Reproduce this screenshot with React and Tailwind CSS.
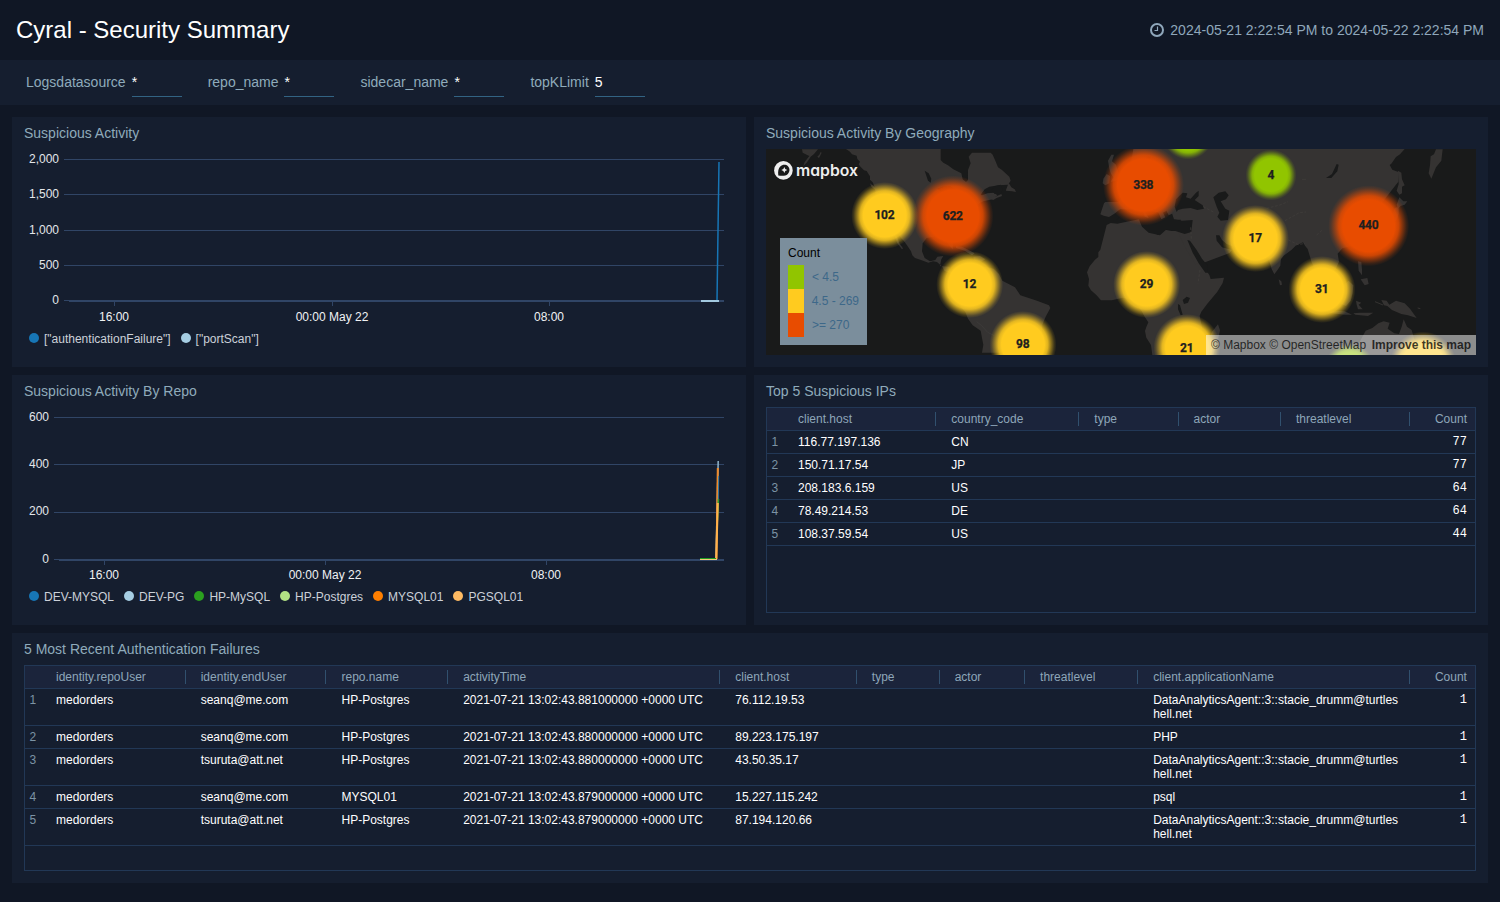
import React from "react";

const filters = [
  ["Logsdatasource", "*"],
  ["repo_name", "*"],
  ["sidecar_name", "*"],
  ["topKLimit", "5"],
];

function Panel({ title, className = "", children }) {
  return (
    <section className={`flex flex-col bg-[#151e2f] px-3 pt-2 ${className}`}>
      <h2 className="h-4 text-sm leading-4 text-[#8fabbb] mb-2 whitespace-nowrap">{title}</h2>
      {children}
    </section>
  );
}

function Legend({ items }) {
  return (
    <ul className="flex gap-[10px] pl-[5px] text-xs leading-[14px] text-[#ccd1d9]">
      {items.map(([name, color]) => (
        <li key={name} className="flex gap-[5px] whitespace-nowrap">
          <svg width="10" height="14" viewBox="0 0 10 14">
            <circle cx="5" cy="6" r="5" fill={color} />
          </svg>
          {name}
        </li>
      ))}
    </ul>
  );
}

function Chart({ top, left, grid, axisY, labelY, ticks, children }) {
  return (
    <svg width="710" height="183" viewBox={`24 ${top} 710 183`} className="shrink-0 text-xs">
      {grid.map(([label, y, textY = y]) => (
        <g key={label}>
          <rect x={left} y={y} width={724 - left} height="1" fill="#304566" />
          <text x={left - 5} y={textY + 4} textAnchor="end" fill="#e3e6ea">{label}</text>
        </g>
      ))}
      <rect x={left + 5} y={axisY + 1} width={719 - left} height="1" fill="#304566" />
      {ticks.map(([label, x]) => (
        <g key={label}>
          <rect x={x} y={axisY + 1} width="1" height="5" fill="#304566" />
          <text x={x} y={labelY} textAnchor="middle" fill="#f0f2f4">{label}</text>
        </g>
      ))}
      {children}
    </svg>
  );
}

function Table({ columns, heads, rows, className }) {
  const last = heads.length - 1;
  return (
    <div className={`border border-[#223856] text-xs leading-[14px] ${className}`}>
      <div className={`grid h-[23px] items-center border-b border-[#223856] bg-[#1b243b] text-[#8ea6b9] ${columns}`}>
        <span />
        {heads.map((h, i) => (
          <span
            key={h}
            className={i === last ? "pr-2 text-right" : "h-[14px] border-r border-[#31506e] pl-[15px]"}
          >
            {h}
          </span>
        ))}
      </div>
      {rows.map((row, r) => (
        <div key={r} className={`grid border-b border-[#223856] py-1 text-white ${columns}`}>
          <span className="pl-[4.4px] text-[#7c93a5]">{r + 1}</span>
          {row.map((c, i) =>
            i === last ? (
              <span key={i} className="h-[14px] pr-2 text-right font-['Liberation_Mono',monospace] leading-[15px]">{c}</span>
            ) : (
              <span key={i} className="whitespace-pre pl-[15px]">{c}</span>
            )
          )}
        </div>
      ))}
    </div>
  );
}

const bubbles = [
  ["102", 118.7, 66.5, 33.5, "y", 65.5],
  ["622", 187, 67, 40.5, "r", 66],
  ["12", 203.7, 135.5, 33.5, "y", 134.5],
  ["98", 257, 195.5, 33.5, "y", 194.5],
  ["338", 377.5, 36, 40.5, "r", 35.5],
  ["", 422, -15, 25.5, "g", 0],
  ["4", 505, 26, 25.5, "g", 25],
  ["17", 489.5, 89.5, 33.5, "y", 88.5],
  ["29", 380.7, 135.5, 33.5, "y", 134.5],
  ["31", 556, 140.5, 33.5, "y", 139],
  ["440", 602.7, 76.8, 40.5, "r", 75.5],
  ["21", 421, 198.5, 33.5, "y", 198.3],
  ["", 583.5, 220, 25.5, "g", 0],
  ["", 657, 216, 33.5, "y", 0],
];
const bubbleColors = { y: "#ffcb1f", r: "#e84c00", g: "#91c500" };

function WorldMap() {
  return (
    <svg width="710" height="206" viewBox="0 0 710 206" className="block">
      <defs>
        {Object.entries(bubbleColors).map(([k, c]) => (
          <radialGradient key={k} id={`bubble-${k}`}>
            <stop offset="0.64" stopColor={c} />
            <stop offset="0.74" stopColor={c} stopOpacity="0.86" />
            <stop offset="0.84" stopColor={c} stopOpacity="0.48" />
            <stop offset="0.93" stopColor={c} stopOpacity="0.16" />
            <stop offset="1" stopColor={c} stopOpacity="0" />
          </radialGradient>
        ))}
      </defs>
      <rect width="710" height="206" fill="#191a1a" />
      {/* Americas */}
      <g transform="translate(-6 -39) scale(0.33333)" fill="#353332">
        <path d="M258 117l12 8 6 8 14 4 2 10 8 8-4 8 6 8 10 10 8 2 6 10 4 6v10l8 8 4 9 5 20-4 30 8 36 34 32 14 8 10 16 8 6 8 12 6 6 10 14 12 18 4 12 8 8 18 6 22 8 14-4 12 2 16 14 6 12 26 12 14-4 12 6 8-10 18-12 22-6 28 4 20 4 16 16 10 20 38 20 16 24 50 16 36 14 4 8-14 26-10 24-2 40-14 20-18 24H666l4-24-4-20-4-22-24-16-14-20-8-20-18-20-12-24 8-16 10-22-4-20-14-14-12-4-6-16-28-2 4-20 6-10-18 2-6 10-16 4-16-10-8-20 2-24 12-16 34-6 22 8 10 18 12 14 2-20-4-20 20-28 10-24 20-14 18-14 14-18 12-6 28-6 14-12-10-8-20 2-16 6-4-2 12-16 14-8 28-4 28-2 8-12-4-12-22-20-12-8-8-20-8-18-6-6h-56l-10 12 6 20-8 20 0 30-6 6-10-8-4-18-12-6-12-6-16-12-14-8-8-8V117z" />
        <path d="M738 240l8-22 8 14 10 6 4 8-12-2-18-2zM690 262l16-2 18-8 2 6-16 6-10 6-6-2zM126 118h48l-12 14-10 8-12 18-10 10 4-12 14-18-8-4-12-6zM172 140l6-6 4-8 3 2-8 16zM588 408l18 2 24 12 14 8-8 6-22-14-26-8zM640 440l20-2 16 10-14 8-20-6zM330 220l14 10 14 12-6 2-18-14zM402 374l8 4 8 18 12 18-4 4-14-18z" />
        <path d="M494 182l12 8 8 16-2 12-8-6zM532 236l16-6 22-2 16 10 14 12-20-2-20-4-16 2zM548 250l10-4-4 26-10 4zM694 240l12-12 16-4 6 16-6 12-18 0z" fill="#191a1a" />
        <path d="M415 382l14 30 6 8-4-2-14-20z" fill="#191a1a" />
        <path d="M650 635l15 12 18 20 20 10" stroke="#403e3d" strokeWidth="2" fill="none" />
      </g>
      {/* Europe, Africa, Asia and Oceania */}
      <g transform="translate(354 -39) scale(0.33333)" fill="#353332">
        <path d="M-40 345l12-6 20 2 28-6 30-6 18-4-2 24 22 12 26 14 10-18 30 6 46 0 18 0 6 26-20 4 10 22 20 30 34 50 4 12 40-4-4 16-16 26-30 36-18 24-5 12 8 40-4 36-20 42H97l-4-30-14-22-4-20 4-12 6-14-12-18-8-16-16-20-10-12-30-8-34 8-32 0-14-16-16-14-8-14 2-20-6-20 8-18 16-20 10-8 0-14 6-8z" />
        <path d="M-48 280l4-4 40 0 16-20 8-30 10-50 10-59h814l-14 16-12 8-14 20-5 4 8 14 20 8-2 28-20 26-20 26-32 44-22 42-24 44-20 10-30 8-14 16 4 24-14 30-24 12-14 16-18-30-12-26-12-40-8-10-6-10-22 10-12 12-24 18-8 10-2 20-8 12-10 14-8-16-6-20-10-30-20-6-50-10-24-4-16 22-26 10-48 18-30 6-6-12-24-40-18-38-4-20 10-24-38 0-18-20-60-10-66-2-18 14-16 10-16-4-10-4z" />
        <path d="M-36 152l10-18 8 0-6 20 12 10 6 20 8 22-16 6-14 4 8-14-8-12-4-14zM-52 220l2-14 10-14 10 6-2 22-12 6zM930 165l2-26 10-6 6-15h20l-4 34-16 20-14 34-8-16zM834 182l10 6 2 20 8 18-8 4 0 20-8 4-8-12 6-20zM838 262l12 12 12 0-8 10-12 4-8 8-4-12zM824 294l12-4 0 22-8 22-18 6-4-10 10-12zM658 540l14-16 14-12 14 14-2 22-6 24-14 16-20-8zM708 572l16 6-8 6 12 14-14 0-4-14zM614 598l28 4 32 2 22 10-22 0-50-6zM700 610l20-2 40 0-16 10-38-4zM714 454l10 2 2 22 0 18-10-14zM722 508l20-4 4 18-12 4zM784 570l16 2 8 12 20-12 26 8 16 16 20 28-26-8-20-4-28-12-14-12-10-2zM476 508l8 6 2 10-6 2zM294 643l6 18-4 20-16 54h-18l0-34 14-36zM725 684l12-22 20-8 18-14 16-6 18 4-6 18 20 14 14 2 8-22 6-22 10 22 14 10 8 28 20 22 10 24H700z" />
        <g fill="#191a1a">
          <path d="M-10 330l20-20 28-16 34 4 40 24 20-16 20-8 10 30 24 4 32-2-4 36-20 6-30-10-24-4-20 18-34-8-20-18-6-14-4-10-36 4z" />
          <path d="M164 290l4-22 20-20 14 2-4 12 14 4 16-18 8-6 0 16-12 12 24 16 4 10-20 4-20-6-24 2-14 4-4 6zM280 262l16-14 20-4 10 12-8 12-16 6 14 22 12 6-4 28-22 2-10-12 6-12-8-18zM202 390l8 2 20 28 16 26 16 20 2 22-8 0-20-28-18-32zM288 376l10 0 8 14 14 12 30 12-4 10-18-6-22-6-16-20zM618 204l18-12 14-30 6 2-4 20-18 20zM188 570l12-10 10 4-6 14-12 4zM174 582l6 4 8 28-6 2-8-18z" />
          <path d="M80 140l12 0-4 24 10 20-10 2-14-12z" />
        </g>
        <path d="M68 300l10 8 8 16-12-4zM110 296l16 6 10 20-12 6zM136 296l14-6 10 20-14 6z" />
        <g fill="none" stroke="#423f3d" strokeWidth="2">
          <path d="M440 295l40-10 24-10M495 332l25-14 18-10 20-2M505 390l30 14 20-4M250 290l30 16M590 375l16-14M212 352l2 34M240 480l-6 40" strokeDasharray="8 5" />
          <path d="M546 208h12M765 575l24 10M893 594l8 2" />
        </g>
      </g>
      {bubbles.map(([, x, y, r, k], i) => (
        <circle key={i} cx={x} cy={y} r={r} fill={`url(#bubble-${k})`} />
      ))}
      <g fontFamily="Roboto, sans-serif" fontSize="12" fontWeight="700" letterSpacing="-0.3" textAnchor="middle" fill="#202020" stroke="#202020" strokeWidth="0.25">
        {bubbles.filter((b) => b[0]).map(([n, x, , , , ty]) => (
          <text key={n} x={x - 0.3} y={ty + 4.5}>{n}</text>
        ))}
      </g>
      {/* Map provider mark */}
      <circle cx="17.4" cy="21.4" r="10" fill="#000" opacity="0.25" />
      <circle cx="17.4" cy="21.4" r="9.3" fill="#eeeeee" />
      <path d="M12.3 26.5c-.5-4.400.1-7.100 2-9 2.200-2.200 5.700-2.200 7.700-.2 2.100 2.100 2 5.500-.1 7.600-2.100 2-5.300 2.200-9.600 1.600z" fill="#191a1a" />
      <path d="M18.300 18l.95 2.050 2.050.95-2.050.95-.95 2.050-.95-2.050-2.050-.95 2.050-.95z" fill="#eeeeee" />
      <text
        x="30" y="27" textLength="62" lengthAdjust="spacingAndGlyphs"
        className="font-['Inter',sans-serif] text-[15.5px] font-semibold [font-feature-settings:'cv11']"
        fill="#eeeeee"
      >
        mapbox
      </text>
    </svg>
  );
}

export default function App() {
  return (
    <div className="flex h-[902px] w-[1500px] flex-col overflow-hidden bg-[#101725] font-['Liberation_Sans',Arial,sans-serif]">
      <header className="flex h-[60px] shrink-0 items-center justify-between px-4">
        <h1 className="text-2xl text-white">Cyral - Security Summary</h1>
        <div className="flex items-center gap-1.5 text-sm text-[#8fa7bb]">
          <svg width="14" height="14" viewBox="0 0 14 14" fill="none" stroke="currentColor">
            <circle cx="7" cy="7" r="6" strokeWidth="2" />
            <path d="M7.500 3.500v4H4.500" strokeWidth="1.2" />
          </svg>
          2024-05-21 2:22:54 PM to 2024-05-22 2:22:54 PM
        </div>
      </header>

      <div className="flex h-[45px] shrink-0 gap-[26px] bg-[#151e2f] px-[26px] pt-2 text-sm">
        {filters.map(([name, value]) => (
          <div key={name} className="flex h-[29px] gap-1.5 leading-[28px]">
            <span className="text-[#8fabbb]">{name}</span>
            <span className="w-[50px] border-b border-[#326383] text-white">{value}</span>
          </div>
        ))}
      </div>

      <main className="grid grid-cols-2 grid-rows-[250px_250px_250px] gap-2 px-3 pt-3">
        <Panel title="Suspicious Activity">
          <Chart
            top={149} left={64} axisY={300} labelY={321}
            grid={[["2,000", 159], ["1,500", 194], ["1,000", 230], ["500", 265], ["0", 300]]}
            ticks={[["16:00", 114], ["00:00 May 22", 332], ["08:00", 549]]}
          >
            <path d="M701 301H717L719 162" fill="none" stroke="#1776b6" strokeWidth="1.5" />
            <rect x="701" y="300" width="18" height="2" fill="#a2c9e0" />
          </Chart>
          <Legend items={[['["authenticationFailure"]', "#1776b6"], ['["portScan"]', "#a6cee3"]]} />
        </Panel>

        <Panel title="Suspicious Activity By Geography">
          <div className="relative h-[206px] w-[710px] overflow-hidden">
            <WorldMap />
            <div className="absolute left-[14px] top-[89px] h-[107px] w-[87px] bg-[#7b8e9c] px-2 pt-2 text-xs leading-[14px]">
              <div className="mb-[5px] text-black">Count</div>
              {[["< 4.5", "bg-[#91c500]"], ["4.5 - 269", "bg-[#ffcb1f]"], [">= 270", "bg-[#e84c00]"]].map(([t, c]) => (
                <div key={t} className="flex h-6 items-center gap-2 whitespace-nowrap text-[#3d6889]">
                  <span className={`h-6 w-4 ${c}`} />
                  {t}
                </div>
              ))}
            </div>
            <div className="absolute bottom-0 right-0 flex h-5 w-[270px] items-center justify-between whitespace-nowrap bg-white/50 px-[5px] text-xs text-black/75">
              <span>© Mapbox © OpenStreetMap</span>
              <b>Improve this map</b>
            </div>
          </div>
        </Panel>

        <Panel title="Suspicious Activity By Repo">
          <Chart
            top={407} left={54} axisY={559} labelY={579}
            grid={[["600", 417], ["400", 464], ["200", 512, 511], ["0", 559]]}
            ticks={[["16:00", 104], ["00:00 May 22", 325], ["08:00", 546]]}
          >
            <path d="M716 559L718.200 461" stroke="#8fb4cc" strokeWidth="1.500" />
            <path d="M716.500 559L717.800 468" stroke="#f08a2a" strokeWidth="2" />
            <path d="M718.200 510L718.700 476" stroke="#1776b6" strokeWidth="0.8" />
            <path d="M717.500 520L718.500 499" stroke="#2ca02c" strokeWidth="1.500" />
            <path d="M716.200 559L717.800 503" stroke="#ffb24d" strokeWidth="2" />
            <rect x="700" y="558" width="16" height="1" fill="#1e9b22" />
            <rect x="700" y="559" width="17" height="1" fill="#f4cd7a" />
          </Chart>
          <Legend
            items={[
              ["DEV-MYSQL", "#1776b6"], ["DEV-PG", "#a6cee3"], ["HP-MySQL", "#2ba01f"],
              ["HP-Postgres", "#b2e284"], ["MYSQL01", "#ff7f00"], ["PGSQL01", "#ffbb63"],
            ]}
          />
        </Panel>

        <Panel title="Top 5 Suspicious IPs">
          <Table
            className="h-[206px]"
            columns="grid-cols-[16px_153.3px_143px_99.3px_102.4px_129px_65px]"
            heads={["client.host", "country_code", "type", "actor", "threatlevel", "Count"]}
            rows={[
              ["116.77.197.136", "CN", "", "", "", "77"],
              ["150.71.17.54", "JP", "", "", "", "77"],
              ["208.183.6.159", "US", "", "", "", "64"],
              ["78.49.214.53", "DE", "", "", "", "64"],
              ["108.37.59.54", "US", "", "", "", "44"],
            ]}
          />
        </Panel>

        <Panel title="5 Most Recent Authentication Failures" className="col-span-2">
          <Table
            className="h-[206px]"
            columns="grid-cols-[16px_144.7px_140.8px_121.7px_272.1px_136.6px_82.8px_85.4px_113.1px_271.8px_65px]"
            heads={["identity.repoUser", "identity.endUser", "repo.name", "activityTime", "client.host", "type", "actor", "threatlevel", "client.applicationName", "Count"]}
            rows={[
              ["medorders", "seanq@me.com", "HP-Postgres", "2021-07-21 13:02:43.881000000 +0000 UTC", "76.112.19.53", "", "", "", "DataAnalyticsAgent::3::stacie_drumm@turtles\nhell.net", "1"],
              ["medorders", "seanq@me.com", "HP-Postgres", "2021-07-21 13:02:43.880000000 +0000 UTC", "89.223.175.197", "", "", "", "PHP", "1"],
              ["medorders", "tsuruta@att.net", "HP-Postgres", "2021-07-21 13:02:43.880000000 +0000 UTC", "43.50.35.17", "", "", "", "DataAnalyticsAgent::3::stacie_drumm@turtles\nhell.net", "1"],
              ["medorders", "seanq@me.com", "MYSQL01", "2021-07-21 13:02:43.879000000 +0000 UTC", "15.227.115.242", "", "", "", "psql", "1"],
              ["medorders", "tsuruta@att.net", "HP-Postgres", "2021-07-21 13:02:43.879000000 +0000 UTC", "87.194.120.66", "", "", "", "DataAnalyticsAgent::3::stacie_drumm@turtles\nhell.net", "1"],
            ]}
          />
        </Panel>
      </main>
    </div>
  );
}
